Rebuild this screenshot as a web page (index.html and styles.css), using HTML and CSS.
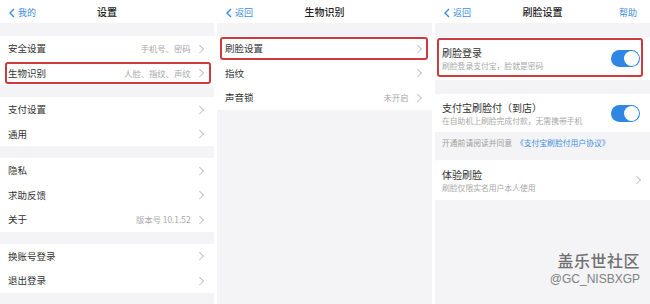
FILE: index.html
```html
<!DOCTYPE html>
<html lang="zh-CN">
<head>
  <meta charset="UTF-8">
  <title>设置</title>
  <link rel="stylesheet" href="styles.css">
</head>
<body>
  <div class="screens">

    <!-- 设置 -->
    <div class="screen">
      <div class="nav">
        <span class="back"><svg width="6" height="10" viewBox="0 0 6 10"><polyline points="5,1 1,5 5,9" /></svg>我的</span>
        <span class="title">设置</span>
      </div>
      <div class="group first">
        <div class="row"><span class="label">安全设置</span><span class="value">手机号、密码</span><i class="chev"></i></div>
        <div class="row marked"><span class="label">生物识别</span><span class="value">人脸、指纹、声纹</span><i class="chev"></i></div>
      </div>
      <div class="group">
        <div class="row"><span class="label">支付设置</span><i class="chev"></i></div>
        <div class="row"><span class="label">通用</span><i class="chev"></i></div>
      </div>
      <div class="group">
        <div class="row"><span class="label">隐私</span><i class="chev"></i></div>
        <div class="row"><span class="label">求助反馈</span><i class="chev"></i></div>
        <div class="row"><span class="label">关于</span><span class="value">版本号 10.1.52</span><i class="chev"></i></div>
      </div>
      <div class="group">
        <div class="row"><span class="label">换账号登录</span><i class="chev"></i></div>
        <div class="row"><span class="label">退出登录</span><i class="chev"></i></div>
      </div>
    </div>

    <!-- 生物识别 -->
    <div class="screen">
      <div class="nav">
        <span class="back"><svg width="6" height="10" viewBox="0 0 6 10"><polyline points="5,1 1,5 5,9" /></svg>返回</span>
        <span class="title">生物识别</span>
      </div>
      <div class="group first">
        <div class="row marked m2"><span class="label">刷脸设置</span><i class="chev"></i></div>
        <div class="row"><span class="label">指纹</span><i class="chev"></i></div>
        <div class="row"><span class="label">声音锁</span><span class="value">未开启</span><i class="chev"></i></div>
      </div>
    </div>

    <!-- 刷脸设置 -->
    <div class="screen">
      <div class="nav">
        <span class="back"><svg width="6" height="10" viewBox="0 0 6 10"><polyline points="5,1 1,5 5,9" /></svg>返回</span>
        <span class="title">刷脸设置</span>
        <span class="help">帮助</span>
      </div>
      <div class="card first marked m3">
        <div class="text">
          <div class="label">刷脸登录</div>
          <div class="desc">刷脸登录支付宝，脸就是密码</div>
        </div>
        <span class="switch"></span>
      </div>
      <div class="card c2">
        <div class="text">
          <div class="label">支付宝刷脸付（到店）</div>
          <div class="desc">在自助机上刷脸完成付款，无需携带手机</div>
        </div>
        <span class="switch"></span>
      </div>
      <div class="tip">开通前请阅读并同意 <span class="link">《支付宝刷脸付用户协议》</span></div>
      <div class="card c3">
        <div class="text">
          <div class="label">体验刷脸</div>
          <div class="desc">刷脸仅限实名用户本人使用</div>
        </div>
        <i class="chev"></i>
      </div>

      <div class="watermark">
        <div class="brand">盖乐世社区</div>
        <div class="handle">@GC_NISBXGP</div>
      </div>
    </div>

  </div>
</body>
</html>
```

FILE: styles.css
```css
body {
  margin: 0;
  background: #fff;
  font-family: "Noto Sans CJK SC", "Noto Sans", sans-serif;
  color: #333;
}
.screens {
  display: flex;
  gap: 3px;
  width: 650px;
  height: 304px;
  overflow: hidden;
}
.screen {
  position: relative;
  flex: 0 0 215px;
  background: #f4f4f6;
  overflow: hidden;
}
.screen:first-child {
  flex-basis: 214px;
}
.nav {
  position: relative;
  height: 23px;
  background: #fff;
  display: flex;
  align-items: center;
  justify-content: center;
}
.nav .title {
  font-size: 10px;
  font-weight: 500;
  color: #222;
}
.nav .back {
  position: absolute;
  left: 9px;
  top: 6px;
  display: flex;
  align-items: center;
  gap: 3px;
  font-size: 9px;
  color: #3b8de0;
}
.nav .back svg polyline {
  fill: none;
  stroke: #3b8de0;
  stroke-width: 1.4;
}
.nav .help {
  position: absolute;
  right: 13px;
  top: 6px;
  font-size: 9px;
  color: #3b8de0;
}
.group {
  margin-top: 12px;
  background: #fff;
}
.group.first {
  margin-top: 13px;
}
.row {
  position: relative;
  height: 24.5px;
  display: flex;
  align-items: center;
  padding: 0 10px 0 8px;
  font-size: 9.5px;
}
.row .label {
  flex: 1;
  color: #333;
}
.row .value {
  font-size: 8.3px;
  color: #a8a8a8;
  margin-right: 6px;
}
.chev {
  width: 4.5px;
  height: 4.5px;
  border-right: 1px solid #c2c2c6;
  border-top: 1px solid #c2c2c6;
  transform: rotate(45deg);
  margin-right: 2px;
}
.marked::after {
  content: "";
  position: absolute;
  left: 5px;
  right: 3px;
  top: 1px;
  bottom: 1px;
  border: 2px solid #cf3a3d;
  border-radius: 3px;
}
.row.m2::after {
  left: 3px;
  right: 4px;
}
.card {
  position: relative;
  background: #fff;
  display: flex;
  align-items: center;
  padding: 0 9px 0 7px;
}
.card.first {
  margin-top: 14px;
  height: 43px;
}
.card.c2 {
  margin-top: 14px;
  height: 38px;
}
.card.c3 {
  height: 40px;
}
.card .text {
  flex: 1;
}
.card .label {
  font-size: 10px;
  color: #333;
  line-height: 13px;
}
.card .desc {
  font-size: 7.8px;
  color: #a8a8a8;
  line-height: 11px;
  margin-top: 1px;
}
.card.marked::after {
  left: 2px;
  right: 7px;
  top: 1px;
  bottom: 3px;
}
.switch {
  position: relative;
  width: 29px;
  height: 17px;
  border-radius: 9px;
  background: #2f86e3;
  margin-right: 1px;
}
.switch::after {
  content: "";
  position: absolute;
  right: 1px;
  top: 1px;
  width: 15px;
  height: 15px;
  border-radius: 50%;
  background: #fff;
}
.tip {
  height: 28px;
  box-sizing: border-box;
  padding: 5px 0 0 7px;
  font-size: 7.8px;
  color: #a0a0a0;
}
.tip .link {
  color: #3b8de0;
  margin-left: 2px;
}
.watermark {
  position: absolute;
  right: 10px;
  top: 249px;
  text-align: right;
  color: #707070;
}
.watermark .brand {
  font-size: 16px;
  font-weight: 500;
  line-height: 22px;
  letter-spacing: 0.5px;
}
.watermark .handle {
  font-size: 12px;
  font-family: "Liberation Sans", sans-serif;
  line-height: 16px;
  color: #808080;
}
```
